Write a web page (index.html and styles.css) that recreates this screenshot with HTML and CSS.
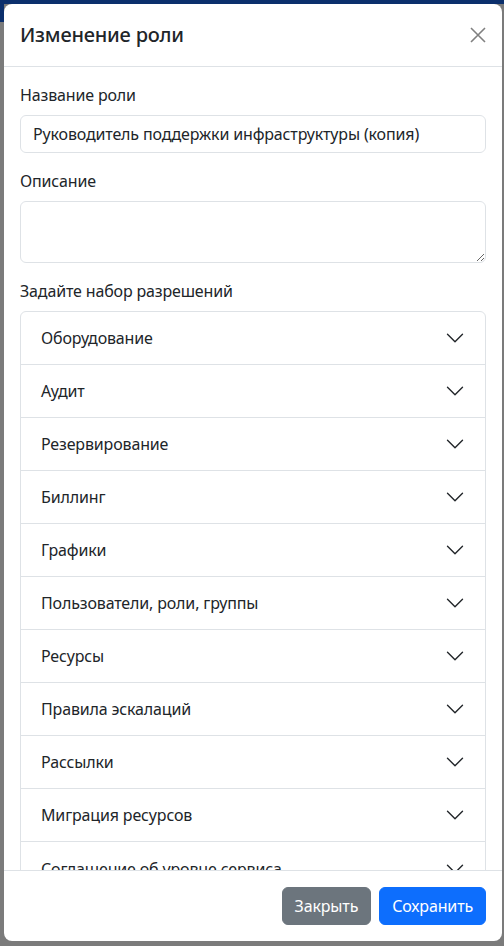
FILE: index.html
```html
<!DOCTYPE html>
<html lang="ru">
<head>
<meta charset="utf-8">
<title>Изменение роли</title>
<link rel="stylesheet" href="styles.css">
</head>
<body>
<div class="backdrop">
  <div class="modal">
    <div class="modal-header">
      <h5 class="modal-title">Изменение роли</h5>
      <button class="btn-close" type="button" aria-label="Закрыть">
        <svg viewBox="0 0 16 16" width="16" height="16"><path d="M1 1L15 15M15 1L1 15" stroke="#808080" stroke-width="1.6" fill="none"/></svg>
      </button>
    </div>
    <div class="modal-body">
      <label class="form-label">Название роли</label>
      <input class="form-control" type="text" value="Руководитель поддержки инфраструктуры (копия)">
      <label class="form-label">Описание</label>
      <textarea class="form-control textarea" rows="2"></textarea>
      <label class="form-label">Задайте набор разрешений</label>
      <div class="accordion">
        <div class="acc-item"><span>Оборудование</span><svg class="chev" viewBox="0 0 16 16"><path d="M2 5L8 11L14 5"/></svg></div>
        <div class="acc-item"><span>Аудит</span><svg class="chev" viewBox="0 0 16 16"><path d="M2 5L8 11L14 5"/></svg></div>
        <div class="acc-item"><span>Резервирование</span><svg class="chev" viewBox="0 0 16 16"><path d="M2 5L8 11L14 5"/></svg></div>
        <div class="acc-item"><span>Биллинг</span><svg class="chev" viewBox="0 0 16 16"><path d="M2 5L8 11L14 5"/></svg></div>
        <div class="acc-item"><span>Графики</span><svg class="chev" viewBox="0 0 16 16"><path d="M2 5L8 11L14 5"/></svg></div>
        <div class="acc-item"><span>Пользователи, роли, группы</span><svg class="chev" viewBox="0 0 16 16"><path d="M2 5L8 11L14 5"/></svg></div>
        <div class="acc-item"><span>Ресурсы</span><svg class="chev" viewBox="0 0 16 16"><path d="M2 5L8 11L14 5"/></svg></div>
        <div class="acc-item"><span>Правила эскалаций</span><svg class="chev" viewBox="0 0 16 16"><path d="M2 5L8 11L14 5"/></svg></div>
        <div class="acc-item"><span>Рассылки</span><svg class="chev" viewBox="0 0 16 16"><path d="M2 5L8 11L14 5"/></svg></div>
        <div class="acc-item"><span>Миграция ресурсов</span><svg class="chev" viewBox="0 0 16 16"><path d="M2 5L8 11L14 5"/></svg></div>
        <div class="acc-item"><span>Соглашение об уровне сервиса</span><svg class="chev" viewBox="0 0 16 16"><path d="M2 5L8 11L14 5"/></svg></div>
      </div>
    </div>
    <div class="modal-footer">
      <button class="btn btn-secondary" type="button">Закрыть</button>
      <button class="btn btn-primary" type="button">Сохранить</button>
    </div>
  </div>
</div>
</body>
</html>
```
FILE: styles.css
```css
* { box-sizing: border-box; }
html, body { margin: 0; height: 100%; }
body {
  font-family: "Noto Sans", "Open Sans", sans-serif;
  color: #212529;
  background: #7a7a7a;
  overflow: hidden;
  letter-spacing: -0.15px;
}
.backdrop {
  height: 100%;
  padding: 4px 2px 5px 4px;
  background:
    linear-gradient(#0b2f6c, #0b2f6c) left top / 100% 4px no-repeat,
    linear-gradient(#0b2f6c, #0b2f6c) left top / 4px 22px no-repeat,
    #7b7b7b;
}
.modal {
  height: 100%;
  background: #fff;
  border-radius: 8px;
  display: flex;
  flex-direction: column;
  overflow: hidden;
}
.modal-header {
  flex: none;
  display: flex;
  align-items: center;
  justify-content: space-between;
  padding: 16px;
  border-bottom: 1px solid #dee2e6;
  height: 63px;
}
.modal-title {
  margin: 0;
  font-size: 20px;
  font-weight: 500;
  line-height: 30px;
  letter-spacing: -0.2px;
}
.btn-close {
  border: 0;
  background: none;
  padding: 0;
  width: 16px;
  height: 16px;
  display: flex;
  cursor: pointer;
}
.modal-body {
  flex: 1;
  min-height: 0;
  overflow: hidden;
  padding: 16px;
  display: flex;
  flex-direction: column;
}
.form-label {
  display: block;
  font-size: 16px;
  line-height: 24px;
  margin-bottom: 8px;
}
.form-control {
  display: block;
  width: 100%;
  flex: none;
  font-family: inherit;
  letter-spacing: inherit;
  font-size: 16px;
  line-height: 24px;
  color: #212529;
  padding: 6px 12px;
  border: 1px solid #dee2e6;
  border-radius: 6px;
  margin: 0 0 16px 0;
  background: #fff;
}
.textarea {
  height: 62px;
  resize: vertical;
}
.accordion {
  flex: none;
  border: 1px solid #dee2e6;
  border-radius: 6px;
}
.acc-item {
  display: flex;
  align-items: center;
  justify-content: space-between;
  padding: 14px 20px;
  line-height: 24px;
  font-size: 16px;
  border-bottom: 1px solid #dee2e6;
  height: 53px;
}
.acc-item:last-child { border-bottom: 0; }
.chev {
  width: 20px;
  height: 20px;
  flex: none;
}
.chev path {
  fill: none;
  stroke: #212529;
  stroke-width: 1.1;
  stroke-linecap: round;
  stroke-linejoin: round;
}
.modal-footer {
  flex: none;
  display: flex;
  justify-content: flex-end;
  align-items: center;
  gap: 8px;
  padding: 16px 16px 16px 12px;
  border-top: 1px solid #dee2e6;
  height: 71px;
}
.btn {
  font-family: inherit;
  letter-spacing: inherit;
  font-size: 16px;
  line-height: 24px;
  padding: 6px 12px;
  border: 1px solid transparent;
  border-radius: 6px;
  color: #fff;
  height: 38px;
}
.btn-secondary { background: #6c757d; border-color: #6c757d; }
.btn-primary { background: #0d6efd; border-color: #0d6efd; }
```
